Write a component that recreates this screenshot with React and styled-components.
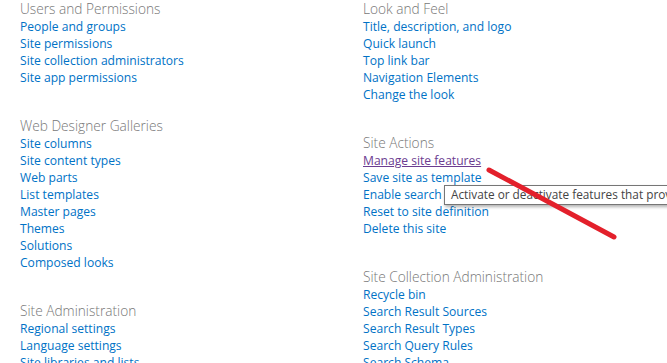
import React from "react";
import styled, { createGlobalStyle } from "styled-components";

const GlobalStyle = createGlobalStyle`
  html, body {
    margin: 0;
    padding: 0;
    background: #ffffff;
    overflow: hidden;
  }
  body {
    font-family: "Open Sans", "Liberation Sans", sans-serif;
  }
`;

const Page = styled.div`
  position: relative;
  width: 667px;
  height: 363px;
  overflow: hidden;
`;

const Columns = styled.div`
  display: grid;
  grid-template-columns: 343px 1fr;
  padding-left: 20px;
  margin-top: -1px;
`;

const Column = styled.div`
  display: flex;
  flex-direction: column;
`;

const Section = styled.div`
  display: flex;
  flex-direction: column;
  margin-bottom: 30px;
`;

const Title = styled.h3`
  margin: 0;
  font-weight: 300;
  font-size: 13.7px;
  line-height: 19px;
  color: #777777;
  white-space: nowrap;
`;

const Link = styled.a`
  font-size: 12.1px;
  line-height: 17px;
  color: ${(p) => (p.$hover ? "#6b3c90" : "#0072c6")};
  text-decoration: ${(p) => (p.$hover ? "underline" : "none")};
  white-space: nowrap;
  width: fit-content;
  cursor: pointer;
`;

const Tooltip = styled.div`
  position: absolute;
  left: 444px;
  top: 185px;
  padding: 1px 6px 2px 6px;
  border: 1px solid #767676;
  background: #ffffff;
  color: #444444;
  font-size: 11.8px;
  line-height: 15px;
  white-space: nowrap;
  box-shadow: 1px 2px 3px rgba(0, 0, 0, 0.3);
`;

const Marker = styled.svg`
  position: absolute;
  left: 0;
  top: 0;
  pointer-events: none;
`;

const left = [
  {
    title: "Users and Permissions",
    links: ["People and groups", "Site permissions", "Site collection administrators", "Site app permissions"],
  },
  {
    title: "Web Designer Galleries",
    links: [
      "Site columns",
      "Site content types",
      "Web parts",
      "List templates",
      "Master pages",
      "Themes",
      "Solutions",
      "Composed looks",
    ],
  },
  {
    title: "Site Administration",
    links: ["Regional settings", "Language settings", "Site libraries and lists", "User alerts"],
  },
];

const right = [
  {
    title: "Look and Feel",
    links: ["Title, description, and logo", "Quick launch", "Top link bar", "Navigation Elements", "Change the look"],
  },
  {
    title: "Site Actions",
    links: ["Manage site features", "Save site as template", "Enable search configuration export", "Reset to site definition", "Delete this site"],
  },
  {
    title: "Site Collection Administration",
    links: ["Recycle bin", "Search Result Sources", "Search Result Types", "Search Query Rules", "Search Schema", "Search Settings"],
  },
];

function LinkSection({ title, links }) {
  return (
    <Section>
      <Title>{title}</Title>
      {links.map((l) => (
        <Link key={l} $hover={l === "Manage site features"}>
          {l}
        </Link>
      ))}
    </Section>
  );
}

export default function App() {
  return (
    <Page>
      <GlobalStyle />
      <Columns>
        <Column>
          {left.map((s) => (
            <LinkSection key={s.title} {...s} />
          ))}
        </Column>
        <Column>
          {right.map((s) => (
            <LinkSection key={s.title} {...s} />
          ))}
        </Column>
      </Columns>
      <Tooltip>Activate or deactivate features that provide functionality across your site</Tooltip>
      <Marker width="667" height="363">
        <line x1="489" y1="170" x2="614" y2="237" stroke="#e3202b" strokeWidth="5" strokeLinecap="round" />
      </Marker>
    </Page>
  );
}
